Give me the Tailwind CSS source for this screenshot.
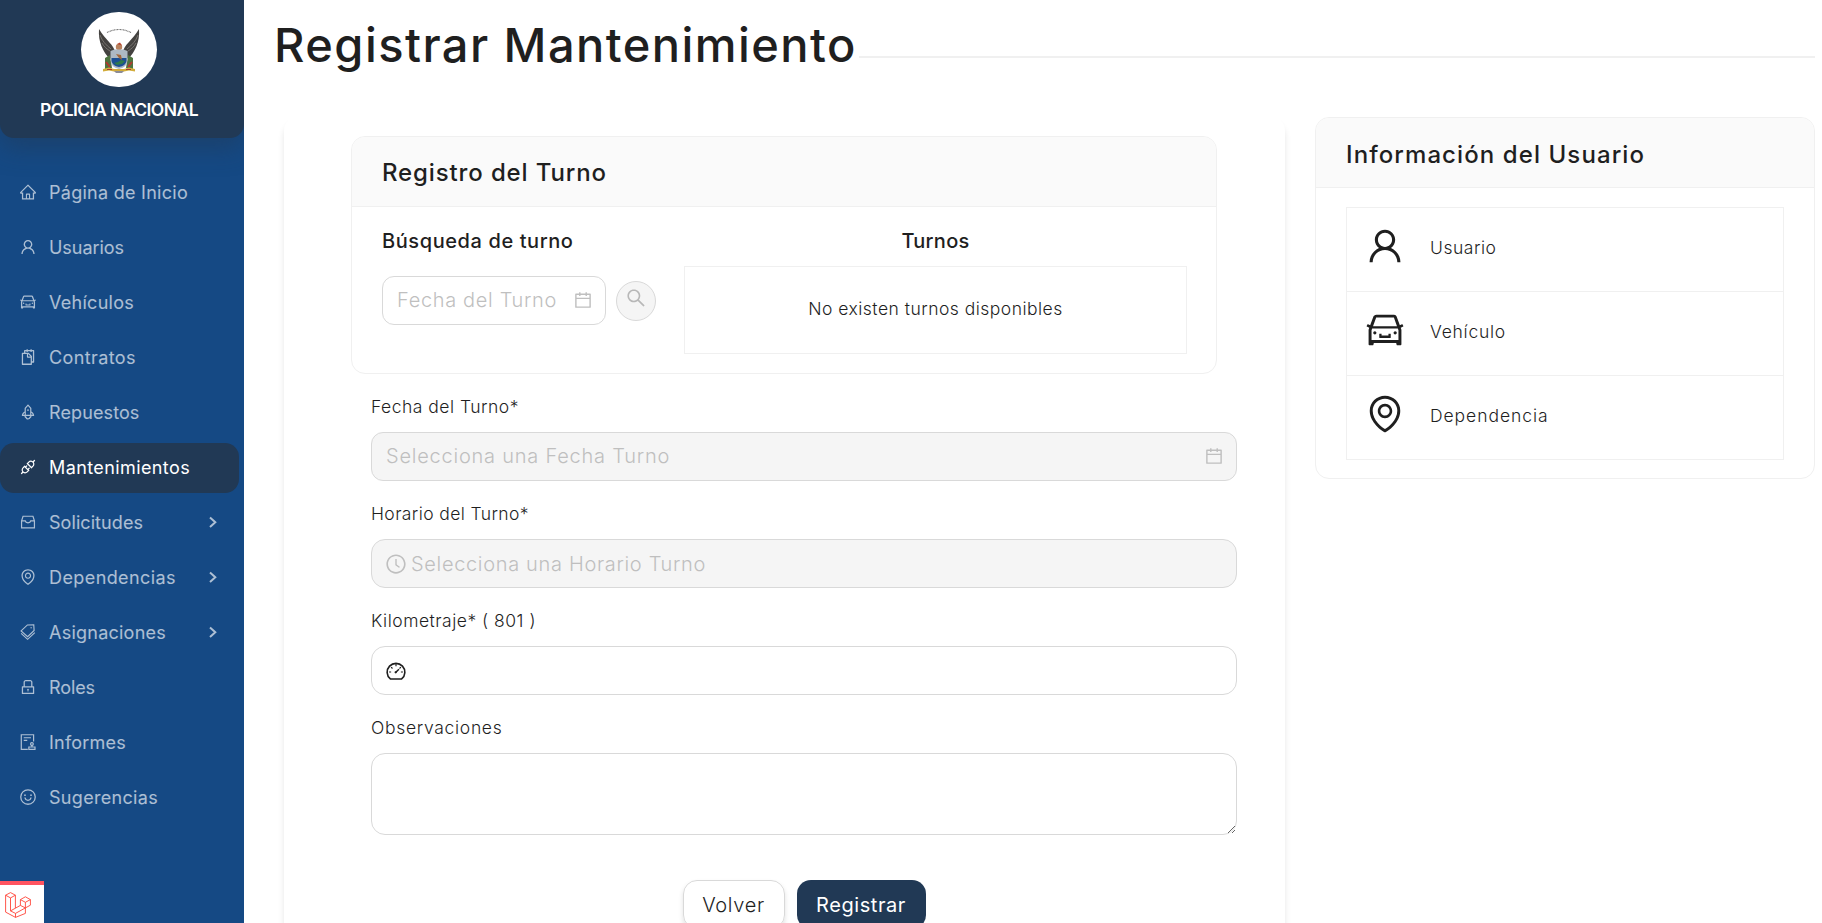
<!DOCTYPE html>
<html lang="es">
<head>
<meta charset="utf-8">
<title>Registrar Mantenimiento</title>
<script src="https://cdn.jsdelivr.net/npm/@tailwindcss/browser@4"></script>
</head>
<body class="h-[923px] w-[1822px] overflow-hidden bg-white font-['Inter',sans-serif] font-light text-[#1f1f1f]">

<svg class="hidden">
  <symbol id="user" viewBox="0 0 1024 1024"><path d="M858.5 763.6a374 374 0 00-80.6-119.5 375.63 375.63 0 00-119.5-80.6c-.4-.2-.8-.3-1.2-.5C719.5 518 760 444.7 760 362c0-137-111-248-248-248S264 225 264 362c0 82.7 40.5 156 102.8 201.1-.4.2-.8.3-1.2.5-44.8 18.9-85 46-119.5 80.6a375.63 375.63 0 00-80.6 119.5A371.7 371.7 0 00136 901.8a8 8 0 008 8.2h60c4.4 0 7.9-3.5 8-7.8 2-77.2 33-149.5 87.8-204.3 56.7-56.7 132-87.9 212.2-87.9s155.5 31.2 212.2 87.9C779 752.7 810 825 812 902.2c.1 4.4 3.6 7.8 8 7.8h60a8 8 0 008-8.2c-1-47.8-10.9-94.3-29.5-138.2zM512 534c-45.9 0-89.1-17.9-121.6-50.4S340 407.9 340 362c0-45.9 17.9-89.1 50.4-121.6S466.1 190 512 190s89.1 17.9 121.6 50.4S684 316.1 684 362c0 45.9-17.9 89.1-50.4 121.6S557.9 534 512 534z"/></symbol>
  <symbol id="car" viewBox="0 0 1024 1024"><path d="M380 704h264c4.4 0 8-3.6 8-8v-84c0-4.4-3.6-8-8-8h-40c-4.4 0-8 3.6-8 8v36H428v-36c0-4.4-3.6-8-8-8h-40c-4.4 0-8 3.6-8 8v84c0 4.4 3.6 8 8 8zm340-123a40 40 0 1080 0 40 40 0 10-80 0zm239-167.6L935.3 372a8 8 0 00-10.9-2.9l-50.7 29.6-78.3-216.2a63.9 63.9 0 00-60.9-44.4H301.2c-34.7 0-65.5 22.4-76.2 55.5l-74.6 205.2-50.8-29.6a8 8 0 00-10.9 2.9L65 413.4c-2.2 3.8-.9 8.6 2.9 10.8l60.4 35.2-14.5 40c-1.2 3.2-1.8 6.6-1.8 10v348.2c0 15.7 11.8 28.4 26.3 28.4h67.6c12.3 0 23-9.3 25.6-22.3l7.7-37.7h545.6l7.7 37.7c2.7 13 13.3 22.3 25.6 22.3h67.6c14.5 0 26.3-12.7 26.3-28.4V509.4c0-3.4-.6-6.8-1.8-10l-14.5-40 60.3-35.2a8 8 0 003-10.8zM840 517v237H184V517l15.6-43h624.8l15.6 43zM292.7 218.1l.5-1.3.4-1.3c1.1-3.3 4.1-5.5 7.6-5.5h427.6l75.4 208H220l72.7-199.9zM224 581a40 40 0 1080 0 40 40 0 10-80 0z"/></symbol>
  <symbol id="pin" viewBox="0 0 1024 1024"><path d="M854.6 289.1a362.49 362.49 0 00-79.9-115.7 370.83 370.83 0 00-118.2-77.8C610.7 76.6 562.1 67 512 67c-50.1 0-98.7 9.6-144.5 28.5-44.3 18.3-84 44.5-118.2 77.8A363.6 363.6 0 00169.4 289c-19.5 45-29.4 92.8-29.4 142 0 70.6 16.9 140.9 50.1 208.7 26.7 54.5 64 107.6 111 158.1 80.3 86.2 164.5 138.9 188.4 153a43.9 43.9 0 0022.4 6.1c7.8 0 15.5-2 22.4-6.1 23.9-14.1 108.1-66.8 188.4-153 47-50.4 84.3-103.6 111-158.1C867.1 572 884 501.8 884 431.1c0-49.2-9.9-97-29.4-142zM512 880.2c-65.9-41.9-300-207.8-300-449.1 0-77.9 31.1-151.1 87.6-206.3C356.3 169.5 431.7 139 512 139s155.7 30.5 212.4 85.900C780.900 280 812 353.200 812 431.100c0 241.300-234.100 407.200-300 449.100zm0-617.200c-97.200 0-176 78.800-176 176s78.800 176 176 176 176-78.800 176-176-78.800-176-176-176zm79.200 255.200A111.600 111.600 0 01512 551c-29.900 0-58-11.700-79.200-32.800A111.600 111.600 0 01400 439c0-29.900 11.700-58 32.800-79.200A111.600 111.600 0 01512 327c29.900 0 58 11.600 79.200 32.800C612.400 381 624 409.100 624 439c0 29.900-11.600 58-32.800 79.200z"/></symbol>
  <symbol id="calendar" viewBox="0 0 1024 1024"><path d="M880 184H712v-64c0-4.400-3.600-8-8-8h-56c-4.400 0-8 3.600-8 8v64H384v-64c0-4.400-3.600-8-8-8h-56c-4.400 0-8 3.600-8 8v64H144c-17.700 0-32 14.300-32 32v664c0 17.700 14.300 32 32 32h736c17.700 0 32-14.300 32-32V216c0-17.700-14.300-32-32-32zm-40 656H184V460h656v380zM184 392V256h128v48c0 4.400 3.600 8 8 8h56c4.400 0 8-3.600 8-8v-48h256v48c0 4.400 3.600 8 8 8h56c4.400 0 8-3.600 8-8v-48h128v136H184z"/></symbol>
  <symbol id="chevron" viewBox="0 0 12 12"><path d="M3 1.500 8.300 6.200 3 10.900" fill="none" stroke="currentColor" stroke-width="2"/></symbol>
</svg>

<div class="flex h-full">
  <aside class="relative h-full w-[244px] shrink-0 overflow-hidden bg-[#154984] text-white/65">
    <div class="flex h-[138px] flex-col items-center rounded-b-[14px] bg-[#213955] pt-3 pr-[6px] shadow-[0_10px_24px_rgba(33,57,85,0.5)]">
      <div class="flex h-[75px] w-[76px] items-center justify-center rounded-full bg-white">
        <svg class="h-[46px] w-[44px]" viewBox="0 0 44 46">
          <path d="M10 5.500Q22-.5 34 5.500" fill="none" stroke="#777" stroke-width="1.200" stroke-dasharray="1 .5"/>
          <path d="M2 2C1 15 6 25 13 32l5-6C18 18 8 13 2 2zM42 2c1 13-4 23-11 30l-5-6C26 18 36 13 42 2z" fill="#444240"/>
          <path d="M3 8c2 6 6 10 11 14M5 16c2 4 5 6 8 8M41 8c-2 6-6 10-11 14M39 16c-2 4-5 6-8 8" fill="none" stroke="#85817c" stroke-width=".8"/>
          <path d="M8 31l5-3 2 13-7 1zM36 31l-5-3-2 13 7 1z" fill="#4e7440"/>
          <path d="M9 35l4 5M35 35l-4 5" stroke="#b3382f" stroke-width="2"/>
          <circle cx="22" cy="20" r="3.200" fill="#b9835f"/>
          <path d="M20 17l3-1.500 2 3z" fill="#b8452f"/>
          <path d="M13.500 24l4-1.500h9l4 1.500v9q0 7-8.500 9-8.500-2-8.500-9z" fill="#aeb9c4"/>
          <path d="M14.500 31h15v3q-1 5-7.500 6-6.500-1-7.500-6z" fill="#1c4f93"/>
          <path d="M17 36l4-1 3-2 4 1-3 3-5 1z" fill="#2f7a4c"/>
          <path d="M19 27l5 1 1 5-3-2z" fill="#a2683c"/>
          <path d="M6 42l6-1.500 5 1.500h10l5-1.500 6 1.500v2.500l-6-1-5 1H17l-5-1-6 1z" fill="#d2ac3b"/>
          <path d="M10 42.500h5M29 42.500h5" stroke="#a83a32"/>
          <path d="M17 44h10l-2 2h-6z" fill="#8c8c96"/>
        </svg>
      </div>
      <div class="mt-[11px] text-[17.5px] leading-[24px] font-semibold tracking-[-0.55px] whitespace-nowrap text-white">POLICIA NACIONAL</div>
    </div>

    <nav class="mt-[30px] flex flex-col gap-[5px] text-[18px] font-normal whitespace-nowrap">
      <a class="flex h-[50px] w-[239px] items-center gap-3 pb-[2px] pl-[19px]"><svg class="size-[18px]" viewBox="0 0 1024 1024" fill="currentColor"><path d="M946.500 505L534.200 92.900a31.500 31.500 0 00-44.400 0L77.500 505a63.900 63.900 0 00-18.800 46c.4 35.200 29.700 63.300 64.900 63.300h42.500V940h691.800V614.300h43.400c17.100 0 33.200-6.700 45.300-18.800a63.600 63.600 0 0018.700-45.300c0-17-6.700-33.100-18.800-45.200zM568 868H456V664h112v204zm217.900-325.700V868H632V640c0-22.100-17.900-40-40-40H432c-22.100 0-40 17.900-40 40v228H238.100V542.300h-96l370-369.700 23.100 23.100L882 542.300h-96.100z"/></svg><span class="tracking-[0.27px]">Página de Inicio</span></a>
      <a class="flex h-[50px] w-[239px] items-center gap-3 pb-[2px] pl-[19px]"><svg class="size-[18px]" fill="currentColor"><use href="#user"/></svg><span class="tracking-[-0.04px]">Usuarios</span></a>
      <a class="flex h-[50px] w-[239px] items-center gap-3 pb-[2px] pl-[19px]"><svg class="size-[18px]" fill="currentColor"><use href="#car"/></svg><span class="tracking-[0.27px]">Vehículos</span></a>
      <a class="flex h-[50px] w-[239px] items-center gap-3 pb-[2px] pl-[19px]"><svg class="size-[18px]" viewBox="0 0 1024 1024" fill="currentColor"><path d="M832 112H724V72c0-4.400-3.600-8-8-8h-56c-4.400 0-8 3.600-8 8v40H500V72c0-4.400-3.600-8-8-8h-56c-4.400 0-8 3.600-8 8v40H320c-17.700 0-32 14.300-32 32v120h-96c-17.700 0-32 14.300-32 32v632c0 17.700 14.300 32 32 32h512c17.700 0 32-14.300 32-32v-96h96c17.700 0 32-14.300 32-32V144c0-17.700-14.300-32-32-32zM664 888H232V336h218v174c0 22.100 17.900 40 40 40h174v338zm0-402H514V336h.2L664 485.800v.2zm128 274h-56V456L544 264H360v-80h68v32c0 4.400 3.600 8 8 8h56c4.400 0 8-3.600 8-8v-32h152v32c0 4.400 3.600 8 8 8h56c4.400 0 8-3.600 8-8v-32h68v576z"/></svg><span class="tracking-[0.4px]">Contratos</span></a>
      <a class="flex h-[50px] w-[239px] items-center gap-3 pb-[2px] pl-[19px]"><svg class="size-[18px]" viewBox="0 0 1024 1024" fill="currentColor"><path d="M864 736c0-111.600-65.400-208-160-252.900V317.300c0-15.100-5.300-29.700-15.100-41.200L536.500 95.400C530.100 87.800 521 84 512 84s-18.100 3.800-24.500 11.400L335.100 276.100a63.970 63.970 0 00-15.100 41.200v165.800C225.400 528 160 624.400 160 736h156.500c-2.300 7.200-3.500 15-3.500 23.800 0 22.100 7.600 43.700 21.400 60.800a97.200 97.200 0 0043.100 30.600c23.100 54 75.600 88.800 134.500 88.800 29.100 0 57.300-8.600 81.400-24.800 23.600-15.800 41.900-37.900 53-64a97 97 0 0043.100-30.500 97.520 97.520 0 0021.400-60.800c0-8.400-1.100-16.400-3.100-23.800H864zM762.300 621.400c9.400 14.600 17 30.300 22.500 46.600H700V558.700a211.600 211.600 0 0162.300 62.700zM388 483.100V318.800l124-147 124 147V668H388V483.100zM239.200 668c5.500-16.300 13.100-32 22.500-46.600 16.300-25.200 37.500-46.500 62.300-62.700V668h-84.800zm388.900 116.200c-5.200 3-11.200 4.200-17.100 3.400l-19.500-2.400-2.800 19.400c-5.400 37.900-38.400 66.500-76.700 66.500-38.300 0-71.300-28.600-76.700-66.500l-2.800-19.500-19.500 2.500a27.700 27.700 0 01-17.100-3.500c-8.700-5-14.100-14.300-14.100-24.400 0-10.600 5.900-19.400 14.600-23.800h231.300c8.800 4.500 14.600 13.300 14.600 23.800-.1 10.200-5.500 19.600-14.200 24.500zM464 400a48 48 0 1096 0 48 48 0 10-96 0z"/></svg><span class="tracking-[0.11px]">Repuestos</span></a>
      <a class="flex h-[50px] w-[239px] items-center gap-3 rounded-[14px] bg-[#213955] pb-[2px] pl-[19px] text-white"><svg class="size-[18px]" viewBox="0 0 1024 1024" fill="currentColor"><path d="M917.700 148.800l-42.400-42.400c-1.600-1.600-3.600-2.300-5.700-2.300s-4.100.8-5.700 2.300l-76.100 76.100a199.270 199.270 0 00-112.100-34.300c-51.200 0-102.400 19.500-141.500 58.600L432.300 308.700a8.030 8.030 0 000 11.300L704 591.700c1.600 1.600 3.600 2.300 5.700 2.300 2 0 4.100-.8 5.700-2.300l101.900-101.900c68.900-69 77-175.700 24.300-253.500l76.100-76.100c3.100-3.200 3.100-8.300 0-11.400zM769.100 441.700l-59.400 59.400-186.800-186.800 59.400-59.400c24.900-24.900 58.100-38.700 93.400-38.700 35.300 0 68.400 13.700 93.400 38.700 24.900 24.900 38.700 58.100 38.700 93.400 0 35.300-13.800 68.400-38.700 93.400zm-190.200 105a8.030 8.030 0 00-11.300 0L501 613.300 410.700 523l66.700-66.700c3.100-3.100 3.100-8.200 0-11.300L441 408.600a8.030 8.030 0 00-11.300 0L363 475.300l-43-43a7.850 7.850 0 00-5.700-2.300c-2 0-4.100.8-5.700 2.300L206.800 534.200c-68.900 69-77 175.700-24.300 253.500l-76.100 76.100a8.030 8.030 0 000 11.300l42.400 42.400c1.600 1.600 3.600 2.300 5.700 2.300s4.100-.8 5.700-2.300l76.100-76.100c33.700 22.900 72.900 34.300 112.100 34.300 51.200 0 102.400-19.500 141.500-58.600l101.900-101.900c3.100-3.100 3.100-8.200 0-11.300l-43-43 66.700-66.700c3.100-3.100 3.100-8.200 0-11.300l-36.600-36.200zM441.700 769.100a131.320 131.320 0 01-93.400 38.700c-35.300 0-68.400-13.700-93.400-38.700a131.320 131.320 0 01-38.700-93.400c0-35.300 13.700-68.400 38.700-93.400l59.400-59.400 186.800 186.800-59.400 59.400z"/></svg><span class="tracking-[0.4px]">Mantenimientos</span></a>
      <a class="flex h-[50px] w-[239px] items-center gap-3 pb-[2px] pl-[19px]"><svg class="size-[18px]" viewBox="0 0 1024 1024" fill="none" stroke="currentColor" stroke-width="68"><path d="M146 450 230 186h564l84 264v400H146zM146 450h210q20 110 156 110t156-110h210"/></svg><span class="tracking-[0.07px]">Solicitudes</span><svg class="mr-5 ml-auto size-3"><use href="#chevron"/></svg></a>
      <a class="flex h-[50px] w-[239px] items-center gap-3 pb-[2px] pl-[19px]"><svg class="size-[18px]" fill="currentColor"><use href="#pin"/></svg><span class="tracking-[0.41px]">Dependencias</span><svg class="mr-5 ml-auto size-3"><use href="#chevron"/></svg></a>
      <a class="flex h-[50px] w-[239px] items-center gap-3 pb-[2px] pl-[19px]"><svg class="size-[18px]" viewBox="0 0 1024 1024" fill="none" stroke="currentColor" stroke-width="64"><path d="M120 450 480 110l360-12 20 330-370 350zM120 590l370 340 410-380"/><circle cx="690" cy="270" r="36" fill="currentColor" stroke="none"/></svg><span class="tracking-[0.24px]">Asignaciones</span><svg class="mr-5 ml-auto size-3"><use href="#chevron"/></svg></a>
      <a class="flex h-[50px] w-[239px] items-center gap-3 pb-[2px] pl-[19px]"><svg class="size-[18px]" viewBox="0 0 1024 1024" fill="currentColor"><path d="M832 464h-68V240c0-70.700-57.300-128-128-128H388c-70.700 0-128 57.300-128 128v224h-68c-17.700 0-32 14.300-32 32v384c0 17.700 14.300 32 32 32h640c17.700 0 32-14.300 32-32V496c0-17.700-14.300-32-32-32zM332 240c0-30.900 25.100-56 56-56h248c30.900 0 56 25.100 56 56v224H332V240zm460 600H232V536h560v304zM484 701v53c0 4.400 3.600 8 8 8h40c4.400 0 8-3.600 8-8v-53a48.010 48.010 0 10-56 0z"/></svg><span class="tracking-[-0.09px]">Roles</span></a>
      <a class="flex h-[50px] w-[239px] items-center gap-3 pb-[2px] pl-[19px]"><svg class="size-[18px]" viewBox="0 0 1024 1024" fill="none" stroke="currentColor" stroke-width="68"><path d="M500 926H130V98h700v390M270 270h410M270 420h200M560 926v-130h350v130zM735 796v-90"/><circle cx="735" cy="630" r="78"/></svg><span class="tracking-[0.22px]">Informes</span></a>
      <a class="flex h-[50px] w-[239px] items-center gap-3 pb-[2px] pl-[19px]"><svg class="size-[18px]" viewBox="0 0 1024 1024" fill="none" stroke="currentColor" stroke-width="72"><circle cx="512" cy="512" r="412"/><path d="M340 540q30 160 172 160t172-160"/><circle cx="340" cy="410" r="48" fill="currentColor" stroke="none"/><circle cx="684" cy="410" r="48" fill="currentColor" stroke="none"/></svg><span class="tracking-[0.31px]">Sugerencias</span></a>
    </nav>

    <div class="absolute bottom-0 left-0 h-[42px] w-[44px] border-t-4 border-[#ff5460] bg-white pt-[7px] pl-[5px]">
      <svg class="size-[26px]" viewBox="0 0 26 26" fill="none" stroke="#ff4438" stroke-linejoin="round"><path d="M.6 3.200 5.500.6l4.900 2.600v13l5-2.800V7.600l5-2.800 5 2.800v5.600l-5 2.700v5.500l-9.900 4-9.900-5.300zM.6 3.200l4.900 2.700 4.900-2.700M5.500 5.900v13l5 2.500 9.900-5.500M5.500 18.900l4.900-2.700M15.400 7.600l5 2.700 5-2.700M20.400 10.300v5.600l-5-2.500M10.500 21.400v4" stroke-width=".9"/></svg>
    </div>
  </aside>

  <main class="min-w-0 flex-1 pr-[7px]">
    <div class="flex items-center pt-[7px] pl-[30px]">
      <h1 class="text-[47px] leading-[76px] font-medium tracking-[1.45px] whitespace-nowrap">Registrar Mantenimiento</h1>
      <div class="mt-[24px] ml-auto h-[2px] w-[956px] bg-[#f0f0f0]"></div>
    </div>

    <div class="mt-[34px] flex items-start justify-between pl-10">
      <section class="h-[860px] w-[1001px] rounded-[14px] px-[67px] pt-[19px] shadow-[0_6px_6px_rgba(0,0,0,0.1)]">
        <div class="h-[238px] w-[866px] rounded-[14px] border border-[#f0f0f0]">
          <div class="h-[70px] rounded-t-[13px] border-b border-[#f0f0f0] bg-[#fafafa] pl-[30px] text-[24px] leading-[72px] font-medium tracking-[0.87px]">Registro del Turno</div>
          <div class="flex pl-[30px]">
            <div class="w-[302px]">
              <div class="pt-[19px] text-[20px] leading-[30px] font-medium tracking-[0.59px]">Búsqueda de turno</div>
              <div class="mt-5 flex items-center gap-[10px]">
                <div class="flex h-[49px] w-[224px] items-center justify-between rounded-xl border border-[#d9d9d9] pr-3 pb-[2px] pl-[14px] text-[20px] text-[#bfbfbf]"><span class="tracking-[0.66px]">Fecha del Turno</span><svg class="size-5" fill="currentColor"><use href="#calendar"/></svg></div>
                <div class="flex size-10 justify-center rounded-full border border-[#d9d9d9] bg-[#f5f5f5] pt-[5px] text-[#b8b8b8]"><svg class="size-[22px]" viewBox="0 0 1024 1024" fill="currentColor"><path d="M909.600 854.500L649.900 594.800C690.200 542.700 712 479 712 412c0-80.200-31.300-155.400-87.900-212.100-56.600-56.700-132-87.900-212.100-87.900s-155.500 31.300-212.100 87.900C143.200 256.500 112 331.800 112 412c0 80.100 31.300 155.500 87.900 212.100C256.500 680.800 331.800 712 412 712c67 0 130.600-21.800 182.700-62l259.700 259.600a8.200 8.200 0 0011.600 0l43.600-43.500a8.200 8.200 0 000-11.600zM570.400 570.400C528 612.700 471.800 636 412 636s-116-23.300-158.400-65.600C211.300 528 188 471.800 188 412s23.300-116.100 65.600-158.400C296 211.300 352.200 188 412 188s116.100 23.200 158.400 65.600S636 352.200 636 412s-23.300 116.100-65.600 158.400z"/></svg></div>
              </div>
            </div>
            <div class="w-[503px]">
              <div class="pt-[19px] text-center text-[20px] leading-[30px] font-medium tracking-[0.25px]">Turnos</div>
              <div class="mt-[10px] h-[88px] border border-[#f0f0f0] text-center text-[17.5px] leading-[84px] tracking-[0.48px]">No existen turnos disponibles</div>
            </div>
          </div>
        </div>

        <form class="ml-5 w-[866px] pt-[18px] text-[17.5px]">
          <div class="leading-[30px] tracking-[0.49px]">Fecha del Turno*</div>
          <div class="mt-[10px] flex h-[49px] items-center justify-between rounded-xl border border-[#d9d9d9] bg-[#f5f5f5] pr-3 pb-[2px] pl-[14px] text-[20px] text-[#bfbfbf]"><span class="tracking-[0.77px]">Selecciona una Fecha Turno</span><svg class="size-5" fill="currentColor"><use href="#calendar"/></svg></div>
          <div class="mt-[18px] leading-[30px] tracking-[0.4px]">Horario del Turno*</div>
          <div class="mt-[10px] flex h-[49px] items-center gap-1 rounded-[14px] border border-[#d9d9d9] bg-[#f5f5f5] px-[13px] text-[20px] text-[#bfbfbf]"><svg class="size-[22px]" viewBox="0 0 1024 1024" fill="currentColor"><path d="M512 64C264.600 64 64 264.600 64 512s200.600 448 448 448 448-200.600 448-448S759.400 64 512 64zm0 820c-205.400 0-372-166.600-372-372s166.600-372 372-372 372 166.600 372 372-166.600 372-372 372z"/><path d="M686.700 638.600L544.100 535.500V288c0-4.400-3.600-8-8-8H488c-4.400 0-8 3.600-8 8v275.400c0 2.600 1.200 5 3.300 6.500l165.400 120.600c3.600 2.600 8.600 1.800 11.200-1.700l28.600-39c2.600-3.700 1.800-8.700-1.800-11.200z"/></svg><span class="tracking-[0.67px]">Selecciona una Horario Turno</span></div>
          <div class="mt-[18px] leading-[30px] tracking-[0.5px]">Kilometraje* ( 801 )</div>
          <div class="mt-[10px] flex h-[49px] items-center rounded-[14px] border border-[#d9d9d9] px-[13px]"><svg class="size-[22px]" viewBox="0 0 1024 1024" fill="none" stroke="currentColor"><path d="M250 884A412 412 0 11774 884z" stroke-width="76"/><path d="M512 190v100M190 560h95M740 560h95M285 332l64 64M675 396l64-64" stroke-width="54"/><path d="M490 580 650 430" stroke-width="70"/><circle cx="497" cy="572" r="54" fill="currentColor" stroke="none"/></svg></div>
          <div class="mt-[18px] leading-[30px] tracking-[0.69px]">Observaciones</div>
          <textarea class="mt-[10px] block h-[82px] w-full resize-y rounded-[14px] border border-[#d9d9d9]"></textarea>
          <div class="mt-[45px] flex justify-center gap-3 text-[20px] leading-[48px]">
            <div class="h-[49px] w-[102px] rounded-[14px] border border-[#d9d9d9] text-center tracking-[0.66px] shadow-[0_3px_5px_rgba(0,0,0,0.12)]">Volver</div>
            <div class="h-[49px] w-[129px] rounded-[14px] bg-[#213955] text-center leading-[50px] font-normal tracking-[0.58px] text-white">Registrar</div>
          </div>
        </form>
      </section>

      <section class="h-[362px] w-[500px] rounded-[14px] border border-[#f0f0f0]">
        <div class="h-[70px] rounded-t-[13px] border-b border-[#f0f0f0] bg-[#fafafa] pl-[30px] text-[24px] leading-[73px] font-medium tracking-[1.09px]">Información del Usuario</div>
        <div class="mx-[30px] mt-[19px] h-[253px] divide-y divide-[#f0f0f0] border border-[#f0f0f0] text-[17.5px]">
          <div class="flex h-[84px] items-center gap-6 pb-[3px] pl-[17px]"><svg class="mb-1 size-[42px]" fill="currentColor"><use href="#user"/></svg><span class="tracking-[0.53px]">Usuario</span></div>
          <div class="flex h-[84px] items-center gap-6 pb-[3px] pl-[17px]"><svg class="mb-1 size-[42px]" fill="currentColor"><use href="#car"/></svg><span class="tracking-[0.75px]">Vehículo</span></div>
          <div class="flex h-[83px] items-center gap-6 pb-[3px] pl-[17px]"><svg class="mb-1 size-[42px]" fill="currentColor"><use href="#pin"/></svg><span class="tracking-[0.94px]">Dependencia</span></div>
        </div>
      </section>
    </div>
  </main>
</div>
</body>
</html>
